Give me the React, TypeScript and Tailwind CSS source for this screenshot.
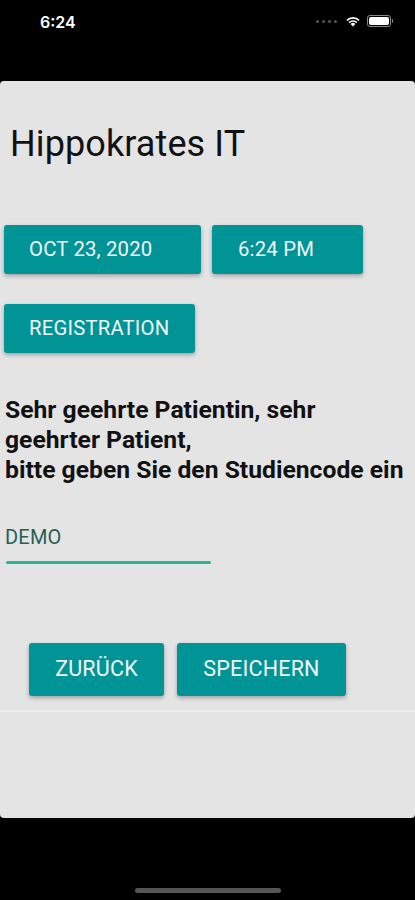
import React from "react";

const btn =
  "bg-[#009497] text-[#f2f7f7] rounded-[3px] shadow-[0_2px_4px_rgba(0,0,0,0.3)] flex items-center tracking-[0.2px]";

export default function App() {
  return (
    <div
      className="w-[415px] h-[900px] bg-black flex flex-col relative overflow-hidden"
      style={{ fontFamily: "Roboto, 'Noto Sans', sans-serif" }}
    >
      {/* status bar */}
      <div className="h-[81px] flex items-start justify-between pt-[12px] pl-[40px] pr-[22px]">
        <span className="text-white text-[16px] font-semibold leading-[20px]" style={{ fontFamily: "Inter, Roboto, sans-serif" }}>
          6:24
        </span>
        <div className="flex items-center gap-[6px] mt-[3px]">
          <div className="flex items-center gap-[3px] mr-[2px]">
            <span className="w-[3px] h-[3px] rounded-full bg-[#555]" />
            <span className="w-[3px] h-[3px] rounded-full bg-[#555]" />
            <span className="w-[3px] h-[3px] rounded-full bg-[#555]" />
            <span className="w-[3px] h-[3px] rounded-full bg-[#555]" />
          </div>
          <svg width="16" height="12" viewBox="0 0 16 12">
            <path d="M8 11.5 L5.6 9 A3.4 3.4 0 0 1 10.4 9 Z" fill="white" />
            <path d="M3.6 7 A6.2 6.2 0 0 1 12.4 7 L11.2 8.2 A4.5 4.5 0 0 0 4.8 8.2 Z" fill="white" />
            <path d="M1.4 4.8 A9.3 9.3 0 0 1 14.6 4.8 L13.4 6 A7.6 7.6 0 0 0 2.6 6 Z" fill="white" />
          </svg>
          <div className="flex items-center">
            <div className="w-[24px] h-[12px] rounded-[3px] border border-[#888] p-[1px]">
              <div className="w-full h-full bg-white rounded-[2px]" />
            </div>
            <div className="w-[1.5px] h-[4px] bg-[#888] rounded-r-sm ml-[1px]" />
          </div>
        </div>
      </div>

      {/* app panel */}
      <div className="h-[737px] bg-[#e4e4e4] rounded-[4px] flex flex-col">
        <h1 className="text-[36px] leading-[40px] text-[#111] pl-[10px] mt-[43px] tracking-[0.1px]">
          Hippokrates IT
        </h1>

        <div className="flex gap-[11px] pl-[4px] mt-[61px]">
          <div className={`${btn} w-[197px] h-[49px] pl-[25px] text-[20.3px]`}>OCT 23, 2020</div>
          <div className={`${btn} w-[151px] h-[49px] pl-[26px] text-[20.3px]`}>6:24 PM</div>
        </div>

        <div className="pl-[4px] mt-[30px]">
          <div className={`${btn} w-[191px] h-[49px] pl-[25px] text-[20.3px]`}>REGISTRATION</div>
        </div>

        <p className="mt-[42px] pl-[5px] text-[24.7px] leading-[30px] font-bold text-[#111]">
          Sehr geehrte Patientin, sehr
          <br />
          geehrter Patient,
          <br />
          bitte geben Sie den Studiencode ein
        </p>

        <div className="mt-[40px] pl-[5px]">
          <div className="text-[20px] leading-[24px] text-[#2a5e52] tracking-[0.2px]">DEMO</div>
          <div className="mt-[12px] ml-[1px] w-[205px] h-[3px] rounded-full bg-[#2bb597]" />
        </div>

        <div className="flex gap-[13px] pl-[29px] mt-[79px]">
          <div className={`${btn} w-[135px] h-[53px] justify-center text-[21.5px]`}>ZURÜCK</div>
          <div className={`${btn} w-[169px] h-[53px] justify-center text-[21.5px]`}>SPEICHERN</div>
        </div>

        <div className="mt-[14px] h-[2px] bg-[#ededed]" />
      </div>

      {/* home indicator */}
      <div className="flex-1 flex items-end justify-center pb-[7px]">
        <div className="w-[146px] h-[5px] rounded-full bg-[#555]" />
      </div>
    </div>
  );
}
